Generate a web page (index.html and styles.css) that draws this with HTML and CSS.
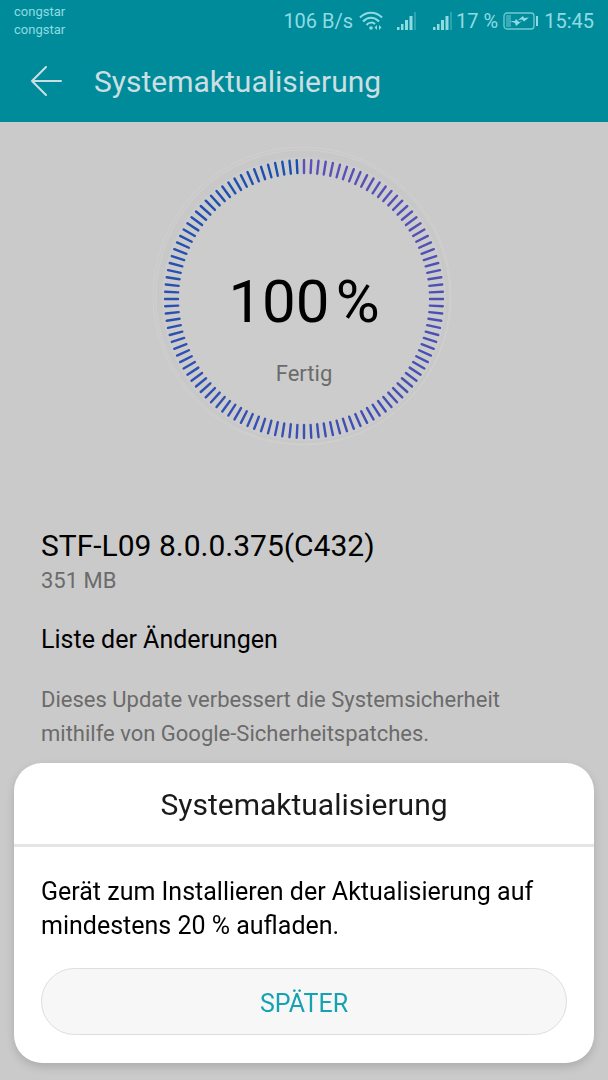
FILE: index.html
```html
<!DOCTYPE html>
<html lang="de">
<head>
    <meta charset="UTF-8">
    <meta name="viewport" content="width=device-width, initial-scale=1.0">
    <title>Systemaktualisierung</title>
    <link rel="stylesheet" href="styles.css">
</head>
<body>

    <header class="top">
        <div class="status-bar">
            <div class="carriers">
                <span>congstar</span>
                <span>congstar</span>
            </div>
            <div class="status">
                <span>106 B/s</span>
                <svg class="wifi" width="24" height="20" viewBox="0 0 24 20" fill="none" stroke="currentColor" stroke-width="2">
                    <path d="M1 6.500C7 0 17 0 23 6.500"/>
                    <path d="M4 10.500C9 5.500 15 5.500 20 10.500"/>
                    <path d="M7.500 14C10 11 14 11 16 13"/>
                    <circle cx="12" cy="17" r="1.800" fill="currentColor" stroke="none"/>
                    <path d="M18 14v5l-2.500-2.500zM20 14v5l2.500-2.500z" fill="currentColor" stroke="none"/>
                </svg>
                <svg class="signal" width="20" height="20" viewBox="0 0 20 20" fill="currentColor">
                    <rect x="0" y="16" width="2.500" height="3"/>
                    <rect x="4" y="13" width="2.500" height="6"/>
                    <rect x="8" y="9" width="3" height="10"/>
                    <rect x="12.500" y="5" width="3" height="14"/>
                    <rect x="17" y="1" width="2" height="18" opacity="0.3"/>
                </svg>
                <svg class="signal" width="20" height="20" viewBox="0 0 20 20" fill="currentColor">
                    <rect x="0" y="16" width="2.500" height="3"/>
                    <rect x="4" y="13" width="2.500" height="6"/>
                    <rect x="8" y="9" width="3" height="10"/>
                    <rect x="12.500" y="5" width="3" height="14"/>
                    <rect x="17" y="1" width="2" height="18" opacity="0.3"/>
                </svg>
                <span>17 %</span>
                <svg class="battery" width="36" height="18" viewBox="0 0 36 18" fill="none" stroke="currentColor">
                    <rect x="1" y="1" width="30" height="16" rx="3" stroke-width="1.300" opacity="0.8"/>
                    <rect x="3" y="3" width="5" height="12" fill="currentColor" stroke="none" opacity="0.4"/>
                    <path d="M7 9l5 0 1-2 3 3 3-1-6 5-1-3z" fill="currentColor" stroke="none"/>
                    <path d="M15 8l5-4 1 2 5-0.500-5 4-2-2z" fill="currentColor" stroke="none"/>
                    <path d="M34 4v10" stroke-width="2"/>
                </svg>
                <span>15:45</span>
            </div>
        </div>
        <div class="title-bar">
            <button class="back" type="button" aria-label="Zurück">
                <svg width="32" height="32" viewBox="0 0 32 32" fill="none" stroke="currentColor" stroke-width="2" stroke-linecap="round" stroke-linejoin="round">
                    <path d="M31 15H2M16 1L2 15l14 14"/>
                </svg>
            </button>
            <h1>Systemaktualisierung</h1>
        </div>
    </header>

    <main>
        <div class="progress">
            <svg class="ring" viewBox="0 0 304 304">
                <circle cx="150" cy="149" r="149" fill="none" stroke="#d0d0d0" stroke-width="1"/>
                <circle cx="151" cy="150" r="147" fill="#c8c8c8" stroke="#d0d0d0" stroke-width="1"/>
                <circle cx="152" cy="152" r="142" fill="#cccccc"/>
                <g id="ticks" stroke-width="2.400" stroke-linecap="round"></g>
            </svg>
            <div class="progress-text">
                <div class="percent">100&#8202;%</div>
                <div class="state">Fertig</div>
            </div>
        </div>

        <h2>STF-L09 8.0.0.375(C432)</h2>
        <p class="size">351 MB</p>
        <h3>Liste der Änderungen</h3>
        <p class="changes">Dieses Update verbessert die Systemsicherheit mithilfe von Google-Sicherheitspatches.</p>
    </main>

    <div class="dialog" role="dialog" aria-labelledby="dialog-title">
        <h2 id="dialog-title">Systemaktualisierung</h2>
        <div class="dialog-body">
            <p>Gerät zum Installieren der Aktualisierung auf mindestens 20 % aufladen.</p>
            <button class="later" type="button">SPÄTER</button>
        </div>
    </div>

    <script src="script.js"></script>
</body>
</html>
```
FILE: styles.css
```css
* {
    box-sizing: border-box;
}

body {
    margin: 0;
    min-height: 100vh;
    font-family: Roboto, sans-serif;
    background-color: #cacaca;
    color: #000;
}

h1, h2, h3, p {
    margin: 0;
    font-weight: 400;
}

button {
    font-family: inherit;
    cursor: pointer;
}

svg {
    display: block;
    flex: none;
}

/* Status bar and title */
.top {
    background-color: #008b9b;
    color: #8fdbe2;
}

.status-bar {
    display: flex;
    justify-content: space-between;
    align-items: center;
    height: 42px;
    padding: 0 14px;
}

.carriers {
    display: flex;
    flex-direction: column;
    font-size: 13px;
    line-height: 18px;
}

.status {
    display: flex;
    align-items: center;
    font-size: 20px;
    line-height: 24px;
}

.wifi {
    margin: 0 14px 0 6px;
}

.signal + .signal {
    margin: 0 3px 0 16px;
}

.battery {
    margin: 0 5px;
}

.title-bar {
    display: flex;
    align-items: center;
    gap: 32px;
    height: 80px;
    padding: 0 30px;
    color: #cbdfe2;
}

.title-bar h1 {
    font-size: 30px;
    line-height: 40px;
}

.back {
    padding: 0;
    border: none;
    background: none;
    color: inherit;
}

/* Page content */
main {
    padding: 25px 41px;
}

.progress {
    display: grid;
    justify-content: center;
    margin-bottom: 75px;
}

.ring,
.progress-text {
    grid-area: 1 / 1;
}

.ring {
    width: 304px;
}

.progress-text {
    padding-top: 120px;
    text-align: center;
}

.percent {
    font-size: 60px;
    line-height: 70px;
}

.state {
    margin-top: 24px;
    font-size: 22px;
    line-height: 26px;
    color: #6b6b6b;
}

main h2 {
    font-size: 30px;
    line-height: 40px;
}

.size {
    font-size: 22px;
    line-height: 30px;
    color: #6b6b6b;
}

main h3 {
    margin: 27px 0 26px;
    font-size: 25px;
    line-height: 34px;
}

.changes {
    font-size: 22px;
    line-height: 34px;
    color: #6b6b6b;
}

/* Dialog over the page */
.dialog {
    position: fixed;
    left: 14px;
    right: 14px;
    bottom: 17px;
    border-radius: 28px;
    background-color: #fff;
    box-shadow: 0 4px 10px rgba(0, 0, 0, 0.15);
}

.dialog h2 {
    padding: 21px 26px 19px;
    border-bottom: 3px solid #e5e5e5;
    font-size: 30px;
    line-height: 41px;
    text-align: center;
    color: #1a1a1a;
}

.dialog-body {
    padding: 28px 27px;
}

.dialog-body p {
    margin-bottom: 25px;
    font-size: 25px;
    line-height: 34px;
}

.later {
    display: block;
    width: 100%;
    height: 67px;
    padding: 3px 0 0;
    border: 1px solid #dedede;
    border-radius: 34px;
    background-color: #f7f7f7;
    color: #16a2b0;
    font-size: 25px;
}
```
FILE: script.js
```js
// Draw the ticks of the progress ring, purple to blue clockwise
var ticks = document.getElementById('ticks');
var count = 120;
var start = [94, 80, 184];
var end = [24, 80, 176];

for (var i = 0; i < count; i++) {
    var part = i / count;
    var color = start.map(function (value, n) {
        return Math.round(value + (end[n] - value) * part);
    });

    var line = document.createElementNS('http://www.w3.org/2000/svg', 'line');
    line.setAttribute('x1', 152);
    line.setAttribute('x2', 152);
    line.setAttribute('y1', 13);
    line.setAttribute('y2', 26);
    line.setAttribute('stroke', 'rgb(' + color.join(',') + ')');
    line.setAttribute('transform', 'rotate(' + part * 360 + ' 152 152)');
    ticks.appendChild(line);
}
```
